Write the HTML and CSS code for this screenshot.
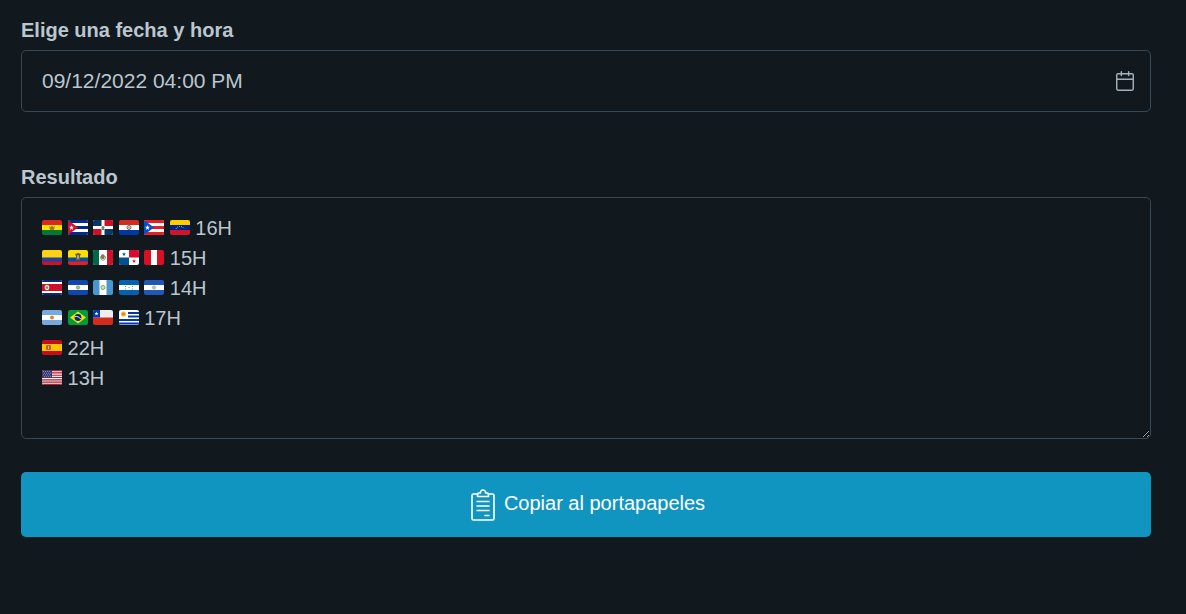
FILE: index.html
```html
<!DOCTYPE html>
<html lang="es">
<head>
<meta charset="utf-8">
<meta name="viewport" content="width=device-width, initial-scale=1">
<title>Conversor de horarios</title>
<link rel="stylesheet" href="styles.css">
</head>
<body>
<main class="page">
  <div class="group">
    <label class="label" for="fecha">Elige una fecha y hora</label>
    <div class="control">
      <input class="field date" id="fecha" type="text" value="09/12/2022 04:00 PM">
      <svg class="calendar" viewBox="0 0 24 24" aria-hidden="true"><rect x="3" y="4" width="18" height="18" rx="1.500"/><path d="M16 2v4M8 2v4M3 10h18"/></svg>
    </div>
  </div>

  <div class="group">
    <label class="label" for="resultado">Resultado</label>
    <div class="control">
      <textarea class="field result" id="resultado" rows="7" spellcheck="false">&emsp; &emsp; &emsp; &emsp; &emsp; &emsp; 16H
&emsp; &emsp; &emsp; &emsp; &emsp; 15H
&emsp; &emsp; &emsp; &emsp; &emsp; 14H
&emsp; &emsp; &emsp; &emsp; 17H
&emsp; 22H
&emsp; 13H</textarea>
      <div class="flags" aria-hidden="true">
        <div class="row">
          <svg class="flag" viewBox="0 0 20 15"><path fill="#d52b1e" d="M0 0h20v5H0z"/><path fill="#f9e300" d="M0 5h20v5H0z"/><path fill="#007934" d="M0 10h20v5H0z"/><path fill="#b58a2c" d="M7 6l2 1 1-2 1 2 2-1-1 4H8z"/><circle cx="10" cy="8" r="1.5" fill="#7a7a3a"/></svg>
          <svg class="flag" viewBox="0 0 20 15"><path fill="#fff" d="M0 0h20v15H0z"/><path fill="#002a8f" d="M0 0h20v3H0zM0 6h20v3H0zM0 12h20v3H0z"/><path fill="#cf142b" d="M0 0l10 7.500L0 15z"/><path fill="#fff" d="M3.500 5l.6 1.800H6L4.500 8l.6 2-1.600-1.200L1.900 10l.6-2L1 6.800h1.900z"/></svg>
          <svg class="flag" viewBox="0 0 20 15"><path fill="#fff" d="M0 0h20v15H0z"/><path fill="#0b3765" d="M0 0h8.500v6H0zM11.500 9H20v6h-8.500z"/><path fill="#ce1126" d="M11.500 0H20v6h-8.500zM0 9h8.500v6H0z"/><circle cx="10" cy="7.500" r="1.500" fill="#5f8862"/><path fill="#b94a4a" d="M9 9h2v1H9z"/></svg>
          <svg class="flag" viewBox="0 0 20 15"><path fill="#d52b1e" d="M0 0h20v5H0z"/><path fill="#fff" d="M0 5h20v5H0z"/><path fill="#0038a8" d="M0 10h20v5H0z"/><circle cx="10" cy="7.500" r="2" fill="#d5d8d5" stroke="#66756b"/><circle cx="10" cy="7.500" r=".8" fill="#c5a740"/></svg>
          <svg class="flag" viewBox="0 0 20 15"><path fill="#fff" d="M0 0h20v15H0z"/><path fill="#ed1c24" d="M0 0h20v3H0zM0 6h20v3H0zM0 12h20v3H0z"/><path fill="#0050d0" d="M0 0l10 7.500L0 15z"/><path fill="#fff" d="M3.500 5l.6 1.800H6L4.500 8l.6 2-1.600-1.200L1.900 10l.6-2L1 6.800h1.900z"/></svg>
          <svg class="flag" viewBox="0 0 20 15"><path fill="#fc0" d="M0 0h20v5H0z"/><path fill="#00247d" d="M0 5h20v5H0z"/><path fill="#cf142b" d="M0 10h20v5H0z"/><path fill="none" stroke="#fff" stroke-dasharray="1 1" stroke-width=".6" d="M6 9c1-3.500 7-3.500 8 0"/></svg>
        </div>
        <div class="row">
          <svg class="flag" viewBox="0 0 20 15"><path fill="#fcd116" d="M0 0h20v8H0z"/><path fill="#21409a" d="M0 7.500h20V12H0z"/><path fill="#ce1126" d="M0 11.500h20V15H0z"/></svg>
          <svg class="flag" viewBox="0 0 20 15"><path fill="#fd0" d="M0 0h20v8H0z"/><path fill="#034ea2" d="M0 7.500h20V12H0z"/><path fill="#ed1c24" d="M0 11.500h20V15H0z"/><path fill="#75582c" d="M7 4l3-1 3 1-1 2v4l-2 1-2-1V6z"/><ellipse cx="10" cy="7" rx="1.200" ry="2" fill="#8eb5b5"/></svg>
          <svg class="flag" viewBox="0 0 20 15"><path fill="#fff" d="M0 0h20v15H0z"/><path fill="#006847" d="M0 0h6v15H0z"/><path fill="#ce1126" d="M14 0h6v15h-6z"/><path fill="none" stroke="#6ba374" d="M7.500 6.500c-.5 5 5.500 5 5 0"/><path fill="#99724f" d="M8 5l2-1 2 2-1 3H9L8 8z"/></svg>
          <svg class="flag" viewBox="0 0 20 15"><path fill="#fff" d="M0 0h20v15H0z"/><path fill="#db0a2f" d="M10 0h10v7.500H10zM15 9l.5 1.500H17l-1.200.9.5 1.600-1.300-1-1.300 1 .5-1.600-1.200-.9h1.500z"/><path fill="#005293" d="M0 7.500h10V15H0zM5 2l.5 1.500H7l-1.200.9.5 1.600L5 5 3.700 6l.5-1.600L3 3.500h1.500z"/></svg>
          <svg class="flag" viewBox="0 0 20 15"><path fill="#d91023" d="M0 0h20v15H0z"/><path fill="#fff" d="M7 0h6v15H7z"/></svg>
        </div>
        <div class="row">
          <svg class="flag" viewBox="0 0 20 15"><path fill="#fff" d="M0 0h20v15H0z"/><path fill="#002b7f" d="M0 0h20v2H0zM0 13h20v2H0z"/><path fill="#ce1126" d="M0 4h20v7H0z"/><ellipse cx="5" cy="7.500" rx="2.300" ry="2.700" fill="#ece8dc"/><circle cx="5" cy="7.500" r="1.200" fill="#748d63"/></svg>
          <svg class="flag" viewBox="0 0 20 15"><path fill="#0f47af" d="M0 0h20v15H0z"/><path fill="#fff" d="M0 5h20v5H0z"/><circle cx="10" cy="7.500" r="1.700" fill="#b6c06e" stroke="#7a9e83" stroke-width=".8"/></svg>
          <svg class="flag" viewBox="0 0 20 15"><path fill="#4997d0" d="M0 0h20v15H0z"/><path fill="#fff" d="M6.500 0h7v15h-7z"/><circle cx="10" cy="7.500" r="2" fill="#e4dfae" stroke="#79a16a"/></svg>
          <svg class="flag" viewBox="0 0 20 15"><path fill="#0062b1" d="M0 0h20v15H0z"/><path fill="#fff" d="M0 5h20v5H0z"/><path fill="#5b9bcf" d="M6 6h1v1H6zM13 6h1v1h-1zM9.500 7h1v1h-1zM6 8.500h1v1H6zM13 8.500h1v1h-1z"/></svg>
          <svg class="flag" viewBox="0 0 20 15"><path fill="#2258b5" d="M0 0h20v15H0z"/><path fill="#fff" d="M0 5h20v5H0z"/><circle cx="10" cy="7.500" r="1.700" fill="#a5cdbd" stroke="#c8b878" stroke-width=".7"/></svg>
        </div>
        <div class="row">
          <svg class="flag" viewBox="0 0 20 15"><path fill="#75aadb" d="M0 0h20v15H0z"/><path fill="#fff" d="M0 5h20v5H0z"/><circle cx="10" cy="7.500" r="2" fill="#d78b35"/></svg>
          <svg class="flag" viewBox="0 0 20 15"><path fill="#009b3a" d="M0 0h20v15H0z"/><path fill="#fedf00" d="M10 1.500l8 6-8 6-8-6z"/><circle cx="10" cy="7.500" r="3.400" fill="#002776"/><path fill="none" stroke="#fff" stroke-width=".9" d="M6.800 6.500c2.500-.3 4.500.5 6 2.500"/></svg>
          <svg class="flag" viewBox="0 0 20 15"><path fill="#eee" d="M0 0h20v8H0z"/><path fill="#d52b1e" d="M0 7.500h20V15H0z"/><path fill="#0039a6" d="M0 0h7v7.500H0z"/><path fill="#fff" d="M3.500 1.500L4 3h1.500l-1.200 1 .4 1.500-1.200-.9-1.200.9.4-1.500-1.200-1H3z"/></svg>
          <svg class="flag" viewBox="0 0 20 15"><path fill="#fff" d="M0 0h20v15H0z"/><path fill="#0038a8" d="M9 2h11v2H9zM9 5.500h11v2H9zM0 9h20v2H0zM0 12.500h20v2H0z"/><circle cx="4.500" cy="4" r="2.600" fill="#f5b94d"/><circle cx="4.500" cy="4" r="1.500" fill="#d9861c"/></svg>
        </div>
        <div class="row">
          <svg class="flag" viewBox="0 0 20 15"><path fill="#c60b1e" d="M0 0h20v15H0z"/><path fill="#ffc400" d="M0 4h20v7H0z"/><path fill="#c35b32" d="M4 6l1-1h3l1 1v3l-1 1H5L4 9z"/><path fill="#dbb0a0" d="M6 6h1v3H6z"/></svg>
        </div>
        <div class="row">
          <svg class="flag" viewBox="0 0 20 15"><path fill="#f2eeee" d="M0 0h20v15H0z"/><path stroke="#b22234" stroke-width="1.150" d="M0 .6h20M0 2.900h20M0 5.200h20M0 7.500h20M0 9.800h20M0 12.100h20M0 14.400h20"/><path fill="#3c3b6e" d="M0 0h10v8H0z"/><path stroke="#a6a5c5" stroke-width=".7" stroke-dasharray="1 1" d="M1 1.500h8M2 3.200h7M1 4.900h8M2 6.600h7"/></svg>
        </div>
      </div>
    </div>
  </div>

  <button class="copy" type="button">
    <svg class="clipboard" viewBox="-4 -1 28 33" aria-hidden="true"><path d="M7 5H2.500Q1 5 1 6.500v23Q1 31 2.500 31h19q1.500 0 1.500-1.500v-23Q23 5 21.500 5H17"/><path d="M7.500 4h2C9 0 15 0 14.500 4h2q1 0 1 1v2.500h-11V5q0-1 1-1zM6 12.500h12M6 17h12M6 21.500h12M14 26.500h4"/></svg>
    <span>Copiar al portapapeles</span>
  </button>
</main>
</body>
</html>
```
FILE: styles.css
```css
* {
  box-sizing: border-box;
}

body {
  margin: 0;
  background: #11191f;
  color: #bbc6ce;
  font: 20px/30px "Liberation Sans", Arial, sans-serif;
}

.page {
  padding: 15px 35px 30px 21px;
}

.group {
  margin-bottom: 50px;
}

.group + .group {
  margin-bottom: 33px;
}

.label {
  display: block;
  margin-bottom: 5px;
  font-weight: 700;
}

.control {
  position: relative;
}

.field {
  display: block;
  width: 100%;
  margin: 0;
  padding: 15px 20px;
  border: 1px solid #374956;
  border-radius: 5px;
  outline: none;
  background: transparent;
  color: inherit;
  font: inherit;
}

.date {
  height: 62px;
  padding-right: 50px;
  font-size: 21px;
}

.calendar {
  position: absolute;
  top: 20px;
  right: 15px;
  width: 22px;
  height: 22px;
  fill: none;
  stroke: #a2afb9;
  stroke-width: 1.6;
  stroke-linecap: round;
  pointer-events: none;
}

.result {
  resize: vertical;
  overflow: auto;
  color-scheme: dark;
}

.flags {
  position: absolute;
  top: 16px;
  left: 21px;
  pointer-events: none;
}

.row {
  height: 30px;
}

.flag {
  width: 20px;
  height: 15px;
  border-radius: 2px;
  vertical-align: baseline;
}

.copy {
  display: flex;
  align-items: flex-start;
  justify-content: center;
  gap: 9px;
  width: 100%;
  padding: 16px 20px;
  border: 0;
  border-radius: 5px;
  background: #1095c1;
  color: #fff;
  font: inherit;
  cursor: pointer;
}

.clipboard {
  width: 28px;
  height: 33px;
  fill: none;
  stroke: #fff;
  stroke-width: 1.6;
  stroke-linejoin: round;
  stroke-linecap: round;
}
```
